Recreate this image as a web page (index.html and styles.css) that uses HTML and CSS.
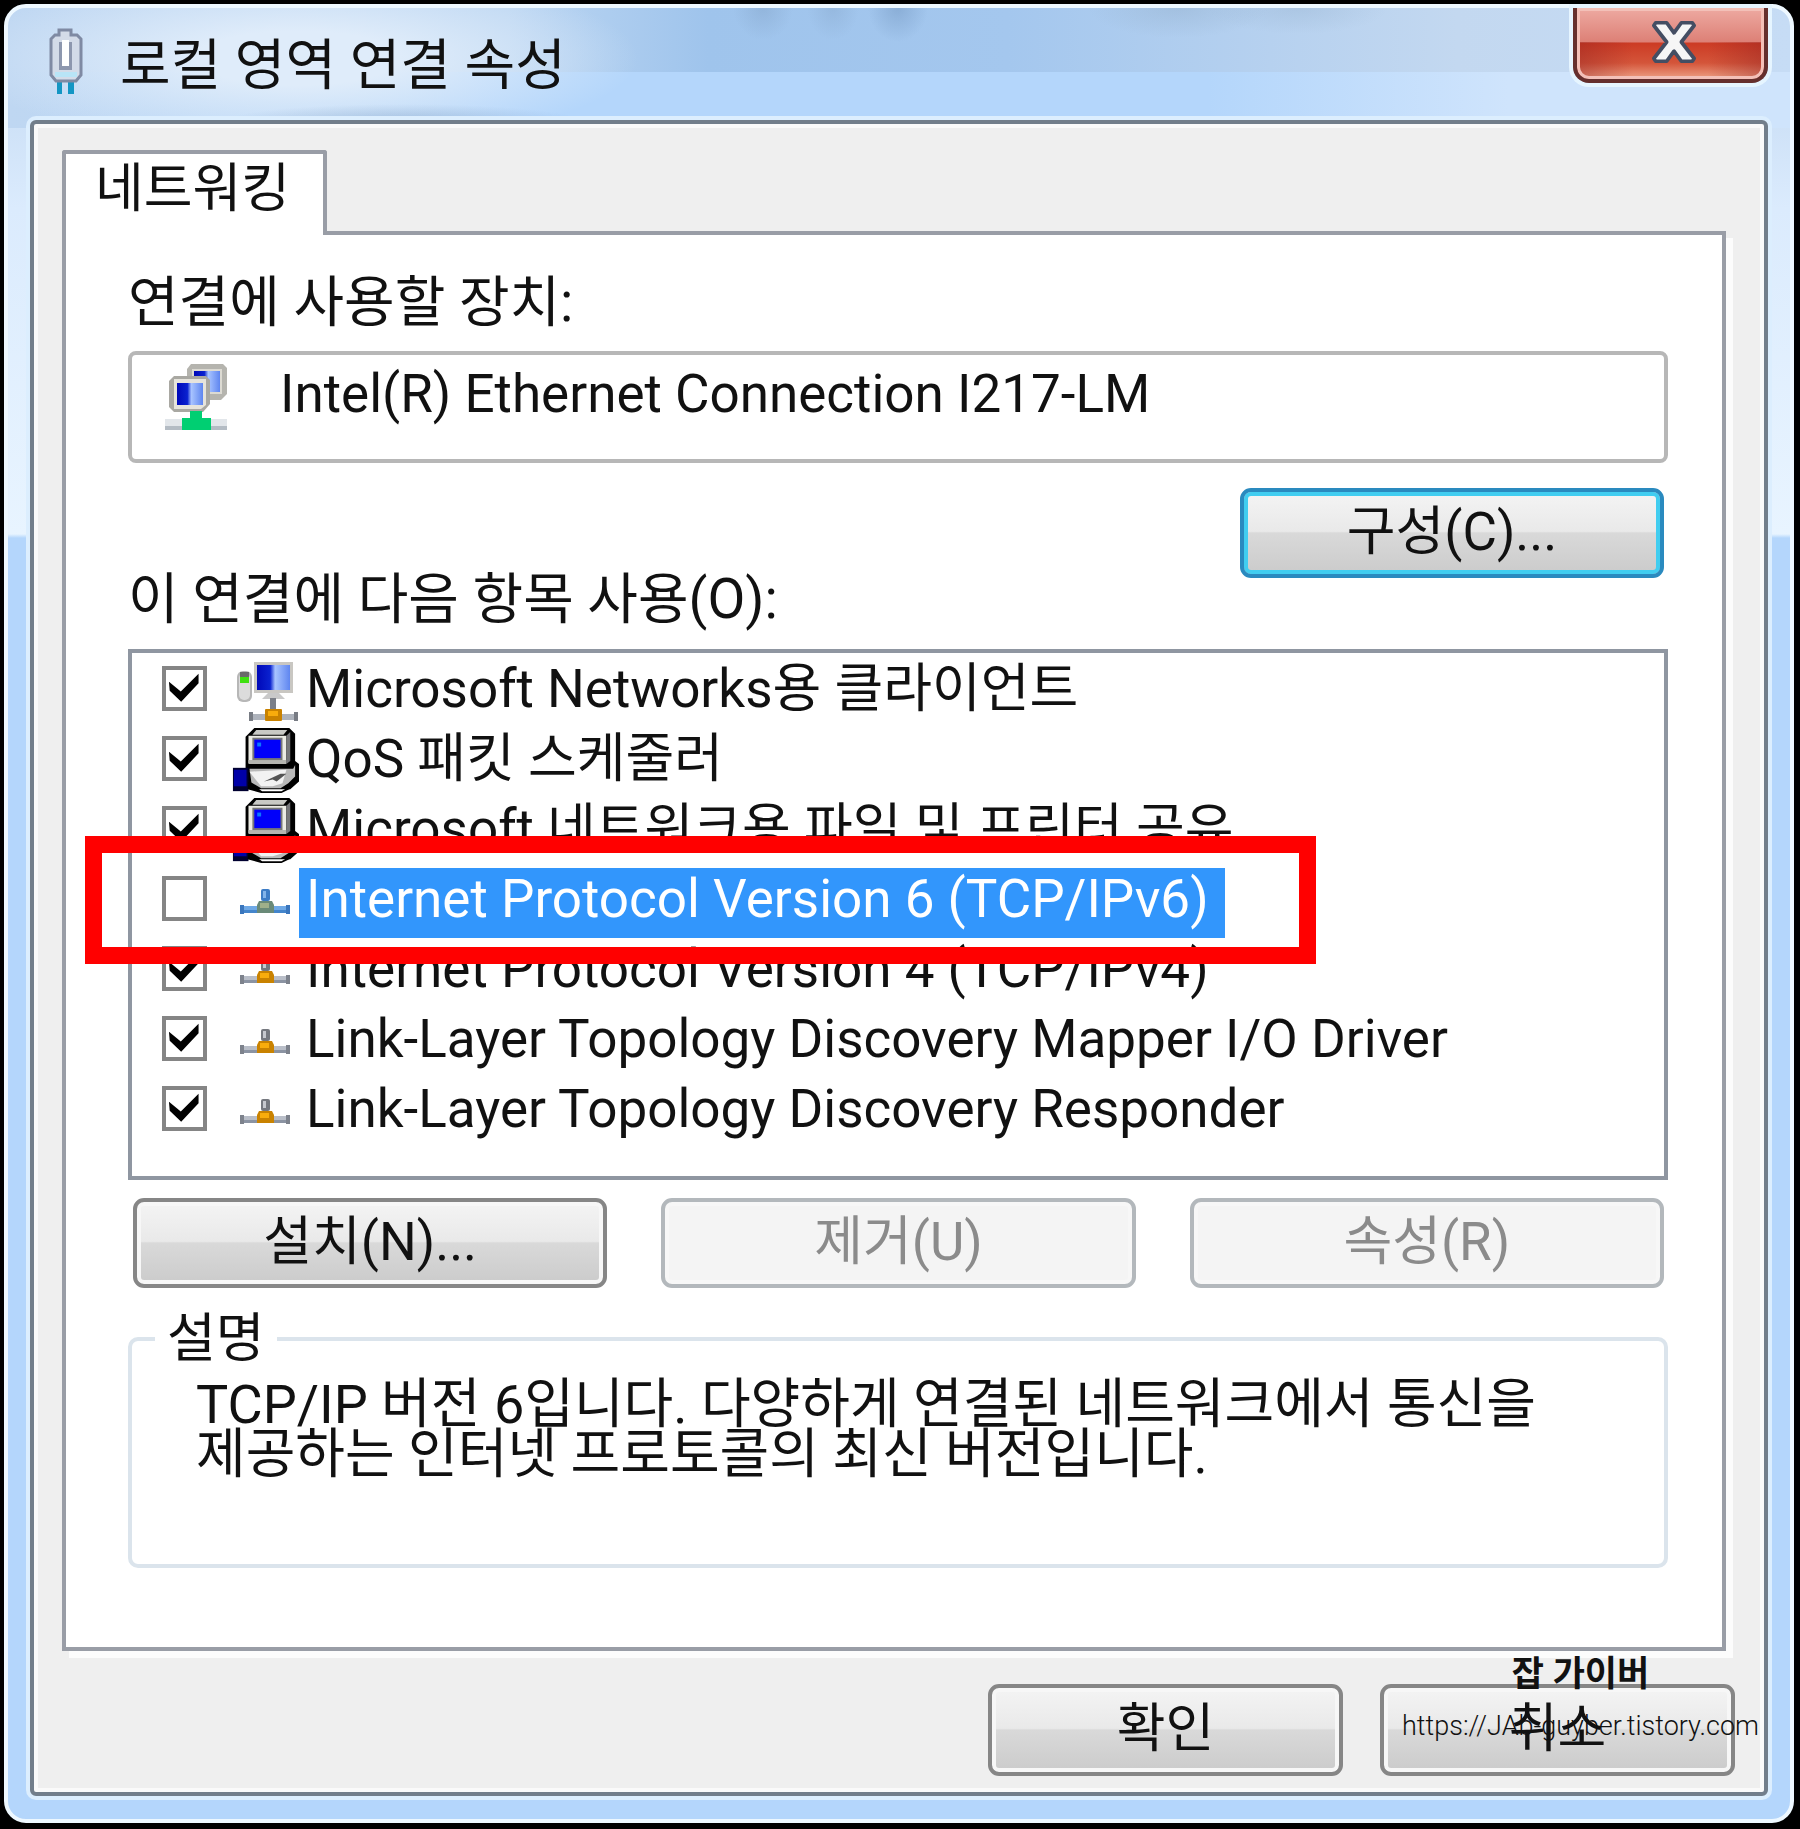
FILE: index.html
```html
<!DOCTYPE html>
<html lang="ko">
<head>
<meta charset="utf-8">
<title>로컬 영역 연결 속성</title>
<link rel="stylesheet" href="styles.css">
</head>
<body>
<svg class="defs" aria-hidden="true">
  <defs>
    <linearGradient id="screen" x1="0" y1="0" x2="1" y2="0">
      <stop offset="0" stop-color="#0008b8"/><stop offset=".4" stop-color="#0a22d0"/>
      <stop offset=".55" stop-color="#a8c4ff"/><stop offset="1" stop-color="#5f86f0"/>
    </linearGradient>
    <symbol id="net" viewBox="0 4 68 68">
      <rect x="9" y="42" width="50" height="7" fill="#b9bec8"/>
      <rect x="9" y="46" width="50" height="3" fill="#8b93a2"/>
      <rect x="9" y="41" width="4" height="9" fill="#7d828c"/><rect x="55" y="41" width="4" height="9" fill="#7d828c"/>
      <rect x="30" y="25" width="9" height="12" rx="2" fill="#75787f"/><rect x="32" y="27" width="3" height="7" fill="#c6c8ce"/>
      <path d="M28 37h13l2 4v8H26v-8z" fill="#c98200"/><rect x="29" y="39" width="9" height="5" fill="#f8ac0c"/>
    </symbol>
    <symbol id="net-selected" viewBox="0 4 68 68">
      <rect x="9" y="42" width="50" height="7" fill="#6fa9e6"/>
      <rect x="9" y="46" width="50" height="3" fill="#4485cb"/>
      <rect x="9" y="41" width="4" height="9" fill="#3a76bd"/><rect x="55" y="41" width="4" height="9" fill="#3a76bd"/>
      <rect x="30" y="25" width="9" height="12" rx="2" fill="#3c7cc6"/><rect x="32" y="27" width="3" height="7" fill="#82b4ea"/>
      <path d="M28 37h13l2 4v8H26v-8z" fill="#6a8a78"/><rect x="29" y="39" width="9" height="5" fill="#9fb08a"/>
    </symbol>
    <symbol id="pc" viewBox="0 1 68 70">
      <path d="M24 0h34l7 7v28l4 3v18l-9 8H20l-6-9V10z" fill="#000"/>
      <path d="M25 3h32l-4 5H21z" fill="#c9c9c5"/>
      <path d="M17 9h39v28H17z" fill="#ecebe4"/><path d="M17 34h39v4H17z" fill="#b5b5b0"/>
      <path d="M56 9l4-4v30l-4 3z" fill="#77777a"/>
      <rect x="21" y="11" width="31" height="23" fill="#777"/>
      <rect x="23" y="13" width="27" height="19" fill="#0000fa"/><rect x="26" y="16" width="4" height="4" fill="#0a78ff"/>
      <path d="M18 43h45l2-4v12l-7 7-8 5H30l-10-6z" fill="#b9b9b9"/>
      <path d="M18 46l38-2-4 14-10 3H30z" fill="#f2f2f2"/>
      <path d="M33 56l17-8 6 0-10 8-4-2z" fill="#555"/>
      <rect x="1" y="42" width="16" height="24" fill="#000030"/><rect x="2" y="44" width="13" height="17" fill="#0000a8"/>
      <path d="M17 56l14 10h20l12-7-4 5-8 4H30l-14-4z" fill="#000"/>
    </symbol>
    <symbol id="client" viewBox="0 0 68 68">
      <rect x="6" y="13" width="15" height="31" rx="6" fill="#b7b7b7"/><rect x="8" y="15" width="11" height="27" rx="5" fill="#dcdcdc"/>
      <rect x="9" y="14" width="9" height="5" fill="#6a6a6a"/><rect x="9" y="19" width="9" height="6" fill="#3fe010"/>
      <rect x="23" y="4" width="39" height="31" fill="#c9c7c2"/><rect x="26" y="7" width="33" height="25" fill="url(#screen)"/>
      <path d="M37 35h11l6 6H31z" fill="#c9c9c9"/><rect x="39" y="40" width="6" height="12" fill="#7b7f88"/>
      <rect x="18" y="56" width="49" height="6" fill="#aeb3bc"/><rect x="18" y="54" width="4" height="9" fill="#787c84"/><rect x="63" y="54" width="4" height="9" fill="#787c84"/>
      <rect x="34" y="51" width="17" height="12" rx="1" fill="#c98200"/><rect x="37" y="53" width="10" height="5" fill="#f8ac0c"/>
    </symbol>
  </defs>
</svg>

<main class="window">
  <header class="titlebar">
    <svg class="plug" viewBox="0 0 36 68" aria-hidden="true">
      <path d="M9 50h5v16H9zM20 50h6v16h-6z" fill="#1496c4"/>
      <path d="M11 2h12v5h6l4 4v36l-5 6H8l-5-6V11l4-4h4z" fill="#d3dbe8" stroke="#7f8aa3" stroke-width="3"/>
      <path d="M11 14h13v28H11z" fill="#8d97ae"/><path d="M14 12h7v26h-7z" fill="#fff"/>
      <path d="M7 44h22v5H7z" fill="#b8e4f6"/>
    </svg>
    <h1 class="title">로컬 영역 연결 속성</h1>
    <button class="close" type="button" aria-label="닫기">
      <svg viewBox="0 0 50 48" aria-hidden="true">
        <path d="M5 3h12l8 11 8-11h12l2 3-14 18 14 18-2 3H33l-8-11-8 11H5l-2-3 14-18L3 6z" fill="#f6f6f6" stroke="#444e63" stroke-width="4" stroke-linejoin="round"/>
      </svg>
    </button>
  </header>

  <section class="client">
    <div class="tabs" role="tablist"><button class="tab" type="button" role="tab" aria-selected="true">네트워킹</button></div>
    <div class="page" role="tabpanel">
      <p class="caption">연결에 사용할 장치:</p>
      <div class="device">
        <svg class="device-icon" viewBox="0 0 64 68" aria-hidden="true">
          <rect x="1" y="56" width="62" height="11" fill="#e2e6ea"/><rect x="1" y="63" width="62" height="4" fill="#b4bcc4"/>
          <path d="M27 1h32l4 4v26l-6 6H38l-15-14V6z" fill="#b5b4ae"/><rect x="28" y="6" width="30" height="25" fill="#dcdad2"/><rect x="30" y="8" width="26" height="21" fill="url(#screen)"/>
          <path d="M10 13h32l4 4v24l-7 8H10l-5-5V18z" fill="#a9a8a2"/><path d="M10 16h32v26l-5 4H10z" fill="#e6e4dc"/><rect x="13" y="20" width="26" height="22" fill="url(#screen)"/>
          <path d="M26 48h12v7h9v12H18V55h8z" fill="#00cf72"/>
        </svg>
        <span>Intel(R) Ethernet Connection I217-LM</span>
      </div>
      <button class="btn btn-config" type="button">구성(C)...</button>
      <p class="caption" id="items-label">이 연결에 다음 항목 사용(O):</p>
      <ul class="items" aria-labelledby="items-label">
        <li><input type="checkbox" id="i1" checked><svg><use href="#client"/></svg><label for="i1">Microsoft Networks용 클라이언트</label></li>
        <li><input type="checkbox" id="i2" checked><svg><use href="#pc"/></svg><label for="i2">QoS 패킷 스케줄러</label></li>
        <li><input type="checkbox" id="i3" checked><svg><use href="#pc"/></svg><label for="i3">Microsoft 네트워크용 파일 및 프린터 공유</label></li>
        <li class="selected"><input type="checkbox" id="i4"><svg><use href="#net-selected"/></svg><label for="i4">Internet Protocol Version 6 (TCP/IPv6)</label><span class="marker"></span></li>
        <li><input type="checkbox" id="i5" checked><svg><use href="#net"/></svg><label for="i5">Internet Protocol Version 4 (TCP/IPv4)</label></li>
        <li><input type="checkbox" id="i6" checked><svg><use href="#net"/></svg><label for="i6">Link-Layer Topology Discovery Mapper I/O Driver</label></li>
        <li><input type="checkbox" id="i7" checked><svg><use href="#net"/></svg><label for="i7">Link-Layer Topology Discovery Responder</label></li>
      </ul>
      <div class="actions">
        <button class="btn" type="button">설치(N)...</button>
        <button class="btn" type="button" disabled>제거(U)</button>
        <button class="btn" type="button" disabled>속성(R)</button>
      </div>
      <fieldset class="about">
        <legend>설명</legend>
        <p>TCP/IP 버전 6입니다. 다양하게 연결된 네트워크에서 통신을<br>제공하는 인터넷 프로토콜의 최신 버전입니다.</p>
      </fieldset>
    </div>
    <footer class="footer">
      <button class="btn" type="button">확인</button>
      <button class="btn" type="button">취소</button>
      <div class="watermark"><strong>잡 가이버</strong><span>https://JAb-guyber.tistory.com</span></div>
    </footer>
  </section>
</main>
</body>
</html>
```
FILE: styles.css
```css
* { box-sizing: border-box; }

body {
  margin: 0;
  padding: 4px 6px 6px 4px;
  background: #000;
  color: #111;
  font: 53px/62px Roboto, "Noto Sans CJK KR", sans-serif;
}

h1, p, ul, fieldset { margin: 0; padding: 0; }
button { font: inherit; color: inherit; cursor: default; }
.defs { position: absolute; width: 0; height: 0; }

.window {
  padding: 0 22px 23px;
  border: 4px solid #eef8ff;
  border-radius: 22px;
  background:
    radial-gradient(ellipse 30px 32px at 755px 0, #7f9fc466, transparent),
    radial-gradient(ellipse 26px 32px at 825px 0, #7f9fc455, transparent),
    radial-gradient(ellipse 30px 34px at 890px 0, #6f93bd77, transparent),
    radial-gradient(ellipse 90px 30px at 1170px 0, #8aa6c255, transparent),
    radial-gradient(ellipse 90px 26px at 1290px 0, #8aa6c244, transparent),
    radial-gradient(ellipse 180px 18px at 395px 114px, #7d9cc077, transparent),
    radial-gradient(ellipse 340px 90px at 290px 50px, #dfecfa 30%, transparent),
    linear-gradient(90deg, #c4daf300, #b4d6fb 500px, #b4d6fb 1200px, #cfe4fc 1500px) 0 64px / 100% 56px no-repeat,
    linear-gradient(90deg, #bfd7f2, #bcd6f2 500px, #9fc4ec 700px, #a4c7ee 1000px, #c3d8f0 1450px, #c6dcf5) 0 0 / 100% 120px no-repeat,
    linear-gradient(#bdd5f0, #dbebfd 200px, #e8f4ff 526px, #b4d6fc 530px);
}

.titlebar {
  display: flex;
  align-items: flex-start;
  height: 112px;
  padding-left: 18px;
}
.plug { width: 36px; height: 68px; margin-top: 20px; }
.title { flex: 1; margin: 26px 0 0 36px; font-size: 55px; font-weight: 400; }

.close {
  width: 195px;
  height: 75px;
  padding: 0 0 0 6px;
  border: 4px solid #652f2d;
  border-top: 0;
  border-radius: 0 0 16px 16px;
  background:
    linear-gradient(90deg, #8f202066, transparent 30%, transparent 70%, #8f202066) 0 34px / 100% 40px no-repeat,
    linear-gradient(#eeaaa2, #dd8076 34px, #cc3b24 35px, #d4553a 55px, #eea287);
  box-shadow: inset 0 0 0 3px #f3c0b8, 0 0 0 4px #e6f5ff;
}
.close svg { display: block; width: 46px; height: 44px; margin: -3px auto 0; }

.client {
  padding: 26px 38px 16px 28px;
  border: 4px solid #727e8b;
  border-radius: 6px;
  background: #efefef;
  box-shadow: inset 0 0 0 4px #fafafa, 0 0 0 4px #dceefe;
}

.tabs { display: flex; }
.tab {
  position: relative;
  width: 265px;
  height: 85px;
  margin-bottom: -4px;
  padding: 0 4px 12px 0;
  border: 4px solid #999da6;
  border-bottom: 0;
  border-radius: 3px 3px 0 0;
  background: #fff;
}

.page {
  padding: 36px 54px 79px 62px;
  border: 4px solid #999da6;
  background: #fff;
  box-shadow: 7px 7px 0 #fcfcfc;
}
.caption { font-size: 55px; }

.device {
  display: flex;
  align-items: flex-start;
  gap: 52px;
  height: 112px;
  margin-top: 18px;
  padding: 8px 32px;
  border: 4px solid #b7b7b7;
  border-radius: 8px;
}
.device-icon { width: 64px; height: 68px; }

.btn {
  height: 90px;
  padding: 0 0 2px;
  border: 4px solid #868686;
  border-radius: 11px;
  background: linear-gradient(#f4f4f4, #e9e9e9 48%, #d9d9d9 50%, #cbcbcb);
  box-shadow: inset 0 0 0 4px #f7f7f7;
}
.btn:disabled {
  border-color: #b3b8bc;
  background: #f4f4f4;
  color: #8b8b8b;
}
.btn-config {
  display: block;
  width: 424px;
  margin: 25px 4px -10px auto;
  border-color: #2a8abf;
  box-shadow: inset 0 0 0 4px #41cdf0;
}

.items {
  height: 531px;
  margin-top: 19px;
  padding: 5px 0 0 30px;
  border: 4px solid #8f96a1;
  list-style: none;
}
.items li { position: relative; display: flex; height: 70px; }
.items svg { width: 68px; height: 68px; margin: 0 0 0 24px; }
.items label { height: 70px; padding: 0 16px 8px 7px; white-space: nowrap; }
.items input {
  appearance: none;
  width: 45px;
  height: 45px;
  margin: 8px 0 0;
  border: 4px solid #858585;
  background: #fff;
}
.items input:checked::before {
  content: "";
  display: block;
  width: 37px;
  height: 37px;
  background: #000;
  clip-path: polygon(8% 32%, 40% 58%, 88% 10%, 88% 36%, 41% 86%, 10% 56%);
}
.selected label { background: #3296fc; color: #fff; }
.selected { z-index: 1; }
.marker {
  position: absolute;
  top: -32px;
  left: -77px;
  width: 1231px;
  height: 128px;
  border: 17px solid #f00;
  pointer-events: none;
}

.actions {
  display: grid;
  grid-template-columns: repeat(3, 1fr);
  gap: 54px;
  margin: 18px 4px 20px 5px;
}

.about {
  padding: 0 0 84px 64px;
  border: 4px solid #dbe4ec;
  border-radius: 10px;
}
.about legend { margin-left: -41px; padding: 0 12px; }
.about p { padding-top: 10px; font-size: 54px; line-height: 50px; white-space: nowrap; }

.footer {
  position: relative;
  display: flex;
  justify-content: flex-end;
  gap: 37px;
  margin: 33px -9px 0 0;
}
.footer .btn { width: 355px; height: 92px; }
.watermark {
  position: absolute;
  right: -24px;
  bottom: 30px;
  display: flex;
  flex-direction: column;
  align-items: center;
  font-size: 27px;
  font-weight: 300;
  line-height: 40px;
  gap: 11px;
}
.watermark strong { font-size: 35px; font-weight: 700; }
```
